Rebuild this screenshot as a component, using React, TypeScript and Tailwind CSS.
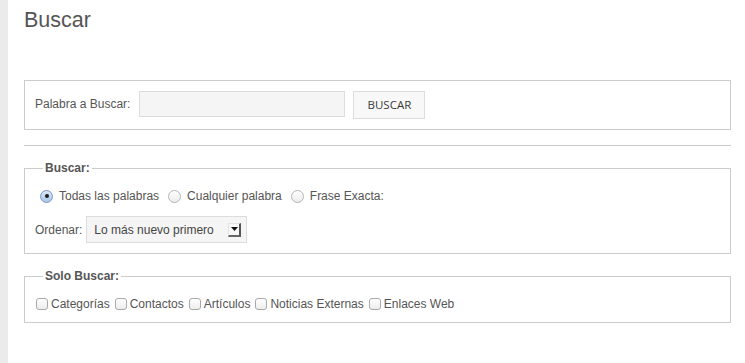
import React from 'react';

const font = "font-['Liberation_Sans',Arial,Helvetica,sans-serif]";

const Radio = ({ checked = false }: { checked?: boolean }) => (
  <span
    className={`flex h-[13px] w-[13px] shrink-0 items-center justify-center rounded-full border ${
      checked
        ? 'border-[#7d98b8] bg-gradient-to-b from-[#dbe8f7] to-[#a9c6ea]'
        : 'border-[#b5b5b5] bg-gradient-to-b from-white to-[#ececec]'
    }`}
  >
    {checked && <span className="h-[4px] w-[4px] rounded-full bg-[#1d1d1d]" />}
  </span>
);

const Checkbox = () => (
  <span className="h-[12px] w-[12px] shrink-0 rounded-[3px] border border-[#a9a9a9] bg-gradient-to-b from-white to-[#ededed]" />
);

const SelectArrow = () => (
  <span className="flex h-[14px] w-[13px] items-start justify-center border-t border-l border-[#e3e3e3] border-r-2 border-b-2 border-r-[#555] border-b-[#666] bg-[#f7f7f7] pt-[3px]">
    <svg width="7" height="4" viewBox="0 0 7 4">
      <path d="M0 0h7L3.5 4z" fill="#111" />
    </svg>
  </span>
);

export default function App() {
  const radios = [
    { label: 'Todas las palabras', checked: true },
    { label: 'Cualquier palabra', checked: false },
    { label: 'Frase Exacta:', checked: false },
  ];
  const areas = ['Categorías', 'Contactos', 'Artículos', 'Noticias Externas', 'Enlaces Web'];

  return (
    <div className={`flex min-h-[363px] w-full bg-white text-[12px] text-[#555] ${font}`}>
      {/* side strip */}
      <div className="w-[8px] shrink-0 bg-[#ebebeb]" />

      <div className="flex-1 pl-[16px] pr-[14px]">
        <h1 className="pt-[7px] text-[21.5px] leading-[26px] text-[#555]">Buscar</h1>

        {/* search box */}
        <div className="mt-[47px] flex h-[50px] items-start border border-[#ccc] pl-[10px] pt-[10px]">
          <span className="mt-[6px] leading-[15px]">Palabra a Buscar:</span>
          <input
            type="text"
            className="ml-[9px] h-[26px] w-[206px] border border-[#ddd] bg-[#f5f5f5] px-2 outline-none"
          />
          <button className="ml-[8px] h-[28px] w-[72px] border border-[#ddd] bg-[#f8f8f8] font-['Open_Sans',sans-serif] text-[11.5px] font-medium text-[#3a3a3a]">
            BUSCAR
          </button>
        </div>

        <hr className="mt-[15px] border-t border-[#ccc]" />

        {/* Buscar options */}
        <fieldset className="mt-[15px] border border-[#ccc] pb-[10px] pl-[10px]">
          <legend className="ml-[8px] px-[2px] font-bold leading-[15px]">Buscar:</legend>
          <div className="mt-[10px] flex h-[20px] items-center">
            {radios.map((r, i) => (
              <label key={r.label} className={`flex items-center ${i === 0 ? 'ml-[5px]' : 'ml-[9px]'}`}>
                <Radio checked={r.checked} />
                <span className="ml-[6px]">{r.label}</span>
              </label>
            ))}
          </div>
          <div className="mt-[10px] flex items-center">
            <span>Ordenar:</span>
            <div className="ml-[4px] flex h-[27px] w-[161px] items-center justify-between border border-[#ddd] bg-[#f5f5f5] pl-[7px] pr-[5px]">
              <span className="text-[#444]">Lo más nuevo primero</span>
              <SelectArrow />
            </div>
          </div>
        </fieldset>

        {/* Solo Buscar */}
        <fieldset className="mt-[15px] border border-[#ccc] pb-[9px] pl-[11px]">
          <legend className="ml-[7px] px-[2px] font-bold leading-[15px]">Solo Buscar:</legend>
          <div className="mt-[11px] flex h-[18px] items-center">
            {areas.map((a, i) => (
              <label key={a} className={`flex items-center ${i === 0 ? '' : 'ml-[5px]'}`}>
                <Checkbox />
                <span className="ml-[3px]">{a}</span>
              </label>
            ))}
          </div>
        </fieldset>
      </div>
    </div>
  );
}
